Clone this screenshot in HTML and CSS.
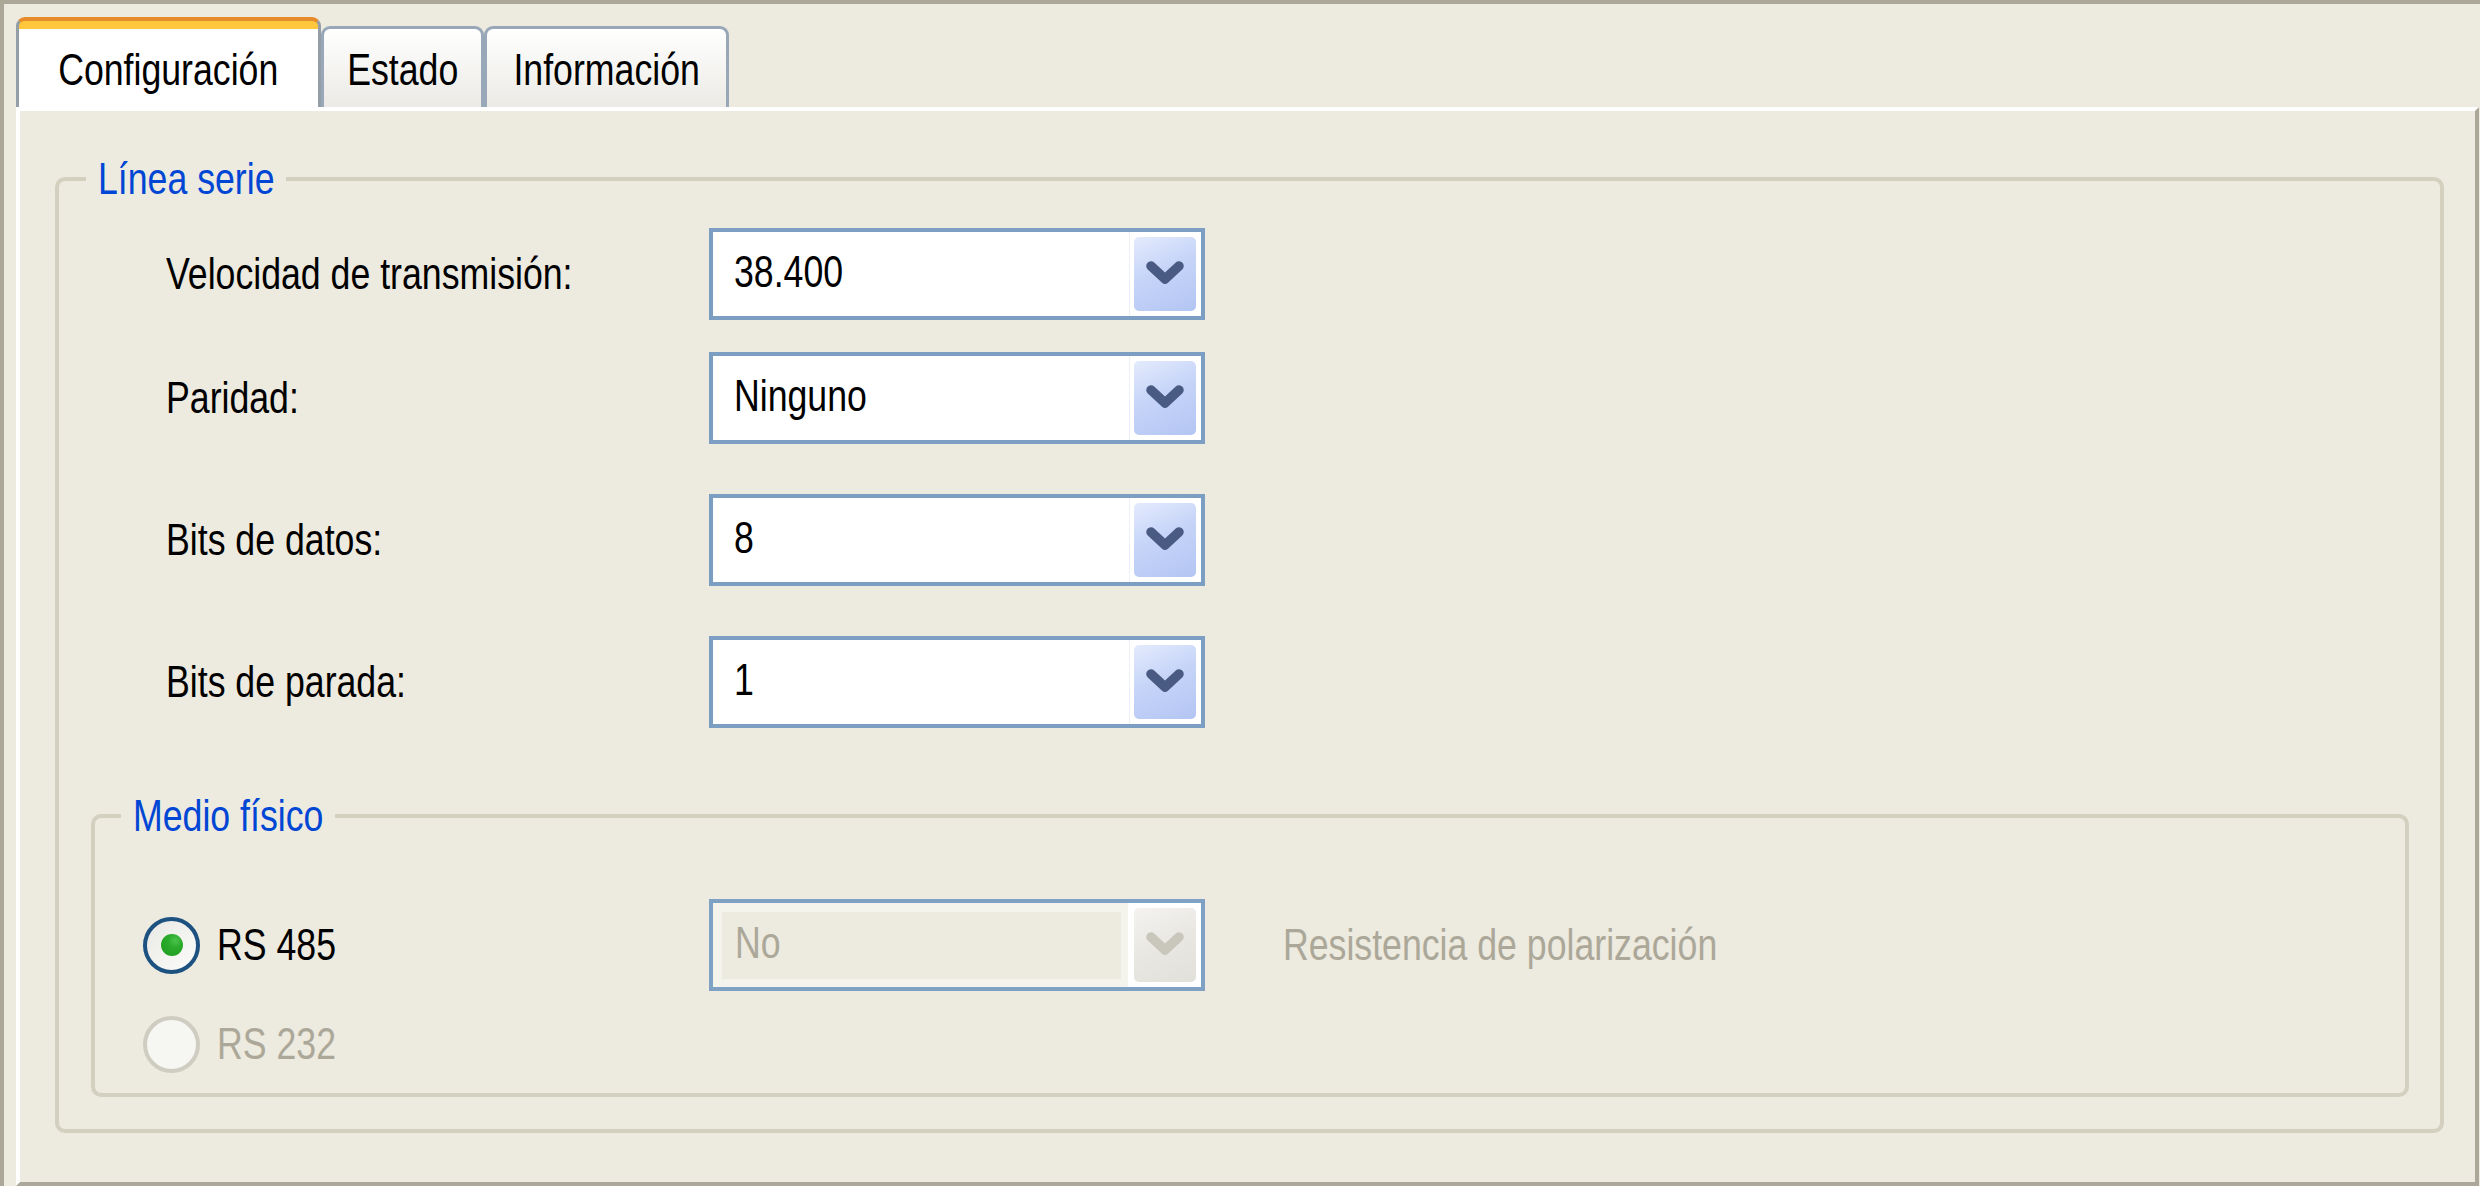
FILE: index.html
```html
<!DOCTYPE html>
<html lang="es">
<head>
    <meta charset="UTF-8">
    <meta name="viewport" content="width=device-width, initial-scale=1.0">
    <title>Línea serie</title>
    <link rel="stylesheet" href="styles.css">
</head>
<body>

    <div class="window">

        <div class="tabs">
            <div class="tab active tab-config"><span class="txt">Configuración</span></div>
            <div class="tab tab-estado"><span class="txt">Estado</span></div>
            <div class="tab tab-info"><span class="txt">Información</span></div>
        </div>

        <div class="panel">
            <fieldset class="group serial">
                <legend><span class="txt">Línea serie</span></legend>

                <div class="rows">
                    <div class="row">
                        <label class="label"><span class="txt">Velocidad de transmisión:</span></label>
                        <div class="combo">
                            <div class="value"><span class="txt">38.400</span></div>
                            <div class="btn-wrap">
                                <div class="combo-btn">
                                    <svg width="40" height="28" viewBox="0 0 40 28"><polyline points="6,6 20,19 34,6" fill="none" stroke="#4a5b83" stroke-width="9.5" stroke-linecap="round" stroke-linejoin="round"/></svg>
                                </div>
                            </div>
                        </div>
                    </div>

                    <div class="row row-2">
                        <label class="label"><span class="txt">Paridad:</span></label>
                        <div class="combo">
                            <div class="value"><span class="txt">Ninguno</span></div>
                            <div class="btn-wrap">
                                <div class="combo-btn">
                                    <svg width="40" height="28" viewBox="0 0 40 28"><polyline points="6,6 20,19 34,6" fill="none" stroke="#4a5b83" stroke-width="9.5" stroke-linecap="round" stroke-linejoin="round"/></svg>
                                </div>
                            </div>
                        </div>
                    </div>

                    <div class="row">
                        <label class="label"><span class="txt">Bits de datos:</span></label>
                        <div class="combo">
                            <div class="value"><span class="txt">8</span></div>
                            <div class="btn-wrap">
                                <div class="combo-btn">
                                    <svg width="40" height="28" viewBox="0 0 40 28"><polyline points="6,6 20,19 34,6" fill="none" stroke="#4a5b83" stroke-width="9.5" stroke-linecap="round" stroke-linejoin="round"/></svg>
                                </div>
                            </div>
                        </div>
                    </div>

                    <div class="row">
                        <label class="label"><span class="txt">Bits de parada:</span></label>
                        <div class="combo">
                            <div class="value"><span class="txt">1</span></div>
                            <div class="btn-wrap">
                                <div class="combo-btn">
                                    <svg width="40" height="28" viewBox="0 0 40 28"><polyline points="6,6 20,19 34,6" fill="none" stroke="#4a5b83" stroke-width="9.5" stroke-linecap="round" stroke-linejoin="round"/></svg>
                                </div>
                            </div>
                        </div>
                    </div>
                </div>

                <fieldset class="group medium">
                    <legend><span class="txt">Medio físico</span></legend>

                    <div class="radio-rows">
                        <div class="radio-row">
                            <div class="radio-item">
                                <span class="radio checked"><span class="dot"></span></span>
                                <span class="txt">RS 485</span>
                            </div>
                            <div class="combo disabled">
                                <div class="value"><span class="txt">No</span></div>
                                <div class="btn-wrap">
                                    <div class="combo-btn">
                                        <svg width="40" height="28" viewBox="0 0 40 28"><polyline points="6,6 20,19 34,6" fill="none" stroke="#c9c7bc" stroke-width="9.5" stroke-linecap="round" stroke-linejoin="round"/></svg>
                                    </div>
                                </div>
                            </div>
                            <span class="txt muted resist">Resistencia de polarización</span>
                        </div>

                        <div class="radio-row small">
                            <div class="radio-item muted">
                                <span class="radio off"></span>
                                <span class="txt">RS 232</span>
                            </div>
                        </div>
                    </div>
                </fieldset>
            </fieldset>
        </div>

    </div>

</body>
</html>
```

FILE: styles.css
```css
body {
    margin: 0;
    font-family: "Liberation Sans", Arial, sans-serif;
    font-size: 43.5px;
    color: #000;
}

/* texto estrecho tipo Arial Narrow */
.txt {
    display: inline-block;
    white-space: nowrap;
    transform: scaleX(0.82);
    transform-origin: left center;
}

/* ventana */
.window {
    height: 1186px;
    box-sizing: border-box;
    display: flex;
    flex-direction: column;
    background: #edeadf;
    border-top: 4px solid #aca899;
    border-left: 4px solid #aca899;
    padding: 0 1px 0 12px;
}

/* pestañas */
.tabs {
    height: 103px;
    flex-shrink: 0;
    display: flex;
    align-items: flex-end;
}

.tab {
    box-sizing: border-box;
    line-height: 50px;
    text-align: center;
    white-space: nowrap;
    border: 3px solid #98a8b8;
    border-bottom: none;
    border-radius: 9px 9px 0 0;
    height: 81px;
    padding: 16px 0 12px;
    background: linear-gradient(#ffffff, #ebeae5);
}

.tab .txt {
    transform-origin: center center;
}

.tab.active {
    height: 90px;
    padding-top: 24px;
    border-color: #939ea6;
    border-top: 4px solid #e68b2c;
    background: linear-gradient(#ffc83c 0, #ffc83c 8px, #fff 8px);
    position: relative;
    z-index: 1;
}

.tab-config { width: 305px; }
.tab-estado { width: 163px; }
.tab-info   { width: 245px; }

.panel {
    flex: 1;
    box-sizing: border-box;
    background: #edeadf;
    border-top: 4px solid #fff;
    border-left: 4px solid #fff;
    border-right: 4px solid #aca899;
    border-bottom: 4px solid #aca899;
    padding: 43px 31px 0 35px;
}

/* grupos */
.group {
    margin: 0;
    padding: 0;
    min-width: 0;
    border: 4px solid #d3d0bf;
    border-radius: 10px;
}

.group legend {
    color: #0046d5;
    line-height: 50px;
    padding: 0 12px;
    margin-left: 27px;
}

/* el ancho del legend no se reduce con scaleX */
.serial > legend .txt { margin-right: -39px; }
.medium > legend .txt { margin-right: -42px; }

.serial {
    padding-bottom: 32px;
}

.rows {
    padding: 24px 0 0 107px;
}

.row {
    display: flex;
    align-items: center;
    height: 92px;
    margin-top: 50px;
}

.row:first-child { margin-top: 0; }
.row.row-2 { margin-top: 32px; }

.label {
    width: 543px;
    flex-shrink: 0;
}

/* combo */
.combo {
    width: 496px;
    height: 92px;
    box-sizing: border-box;
    flex-shrink: 0;
    display: flex;
    border: 4px solid #7b9ec2;
    background: #fff;
}

.combo .value {
    flex: 1;
    display: flex;
    align-items: center;
    padding: 0 0 4px 21px;
    border-right: 1px solid #edf0f6;
}

.btn-wrap {
    padding: 5px 5px 5px 4px;
    background: #fff;
}

.combo-btn {
    width: 62px;
    height: 100%;
    border-radius: 5px;
    background: linear-gradient(155deg, #e4ebfd 0%, #c6d4f8 45%, #b3c5f3 100%);
    display: flex;
    align-items: center;
    justify-content: center;
}

.combo.disabled {
    background: #f5f4ec;
    border-color: #7fa1c4;
}

.combo.disabled .value {
    margin: 9px 7px 8px 9px;
    padding: 0 0 4px 13px;
    background: #edeadf;
    border-right: none;
    color: #aca899;
}

.combo.disabled .btn-wrap {
    padding-left: 6px;
}

.combo.disabled .combo-btn {
    background: linear-gradient(155deg, #f4f3f0 0%, #e9e7e2 50%, #e2e0da 100%);
}

/* medio físico */
.medium {
    margin: 63px 31px 0 32px;
}

.medium legend {
    margin-left: 26px;
}

.radio-rows {
    padding: 58px 0 20px 48px;
}

.radio-row {
    display: flex;
    align-items: center;
    height: 92px;
}

.radio-row.small {
    height: 57px;
    margin-top: 25px;
}

.radio-item {
    width: 566px;
    flex-shrink: 0;
    display: flex;
    align-items: center;
    gap: 17px;
}

.radio {
    width: 57px;
    height: 57px;
    box-sizing: border-box;
    border-radius: 50%;
    display: flex;
    align-items: center;
    justify-content: center;
}

.radio.checked {
    border: 4px solid #1c5180;
    background: linear-gradient(135deg, #e9e9e4, #fbfbfa);
}

.radio.off {
    border: 4px solid #cfcdc2;
    background: #f6f6f3;
}

.dot {
    width: 22px;
    height: 22px;
    border-radius: 50%;
    background: radial-gradient(circle at 65% 30%, #4cc24c 0, #2aab2a 35%, #1d9a1d 100%);
}

.muted {
    color: #aca899;
}

.resist {
    margin-left: 78px;
}
```
